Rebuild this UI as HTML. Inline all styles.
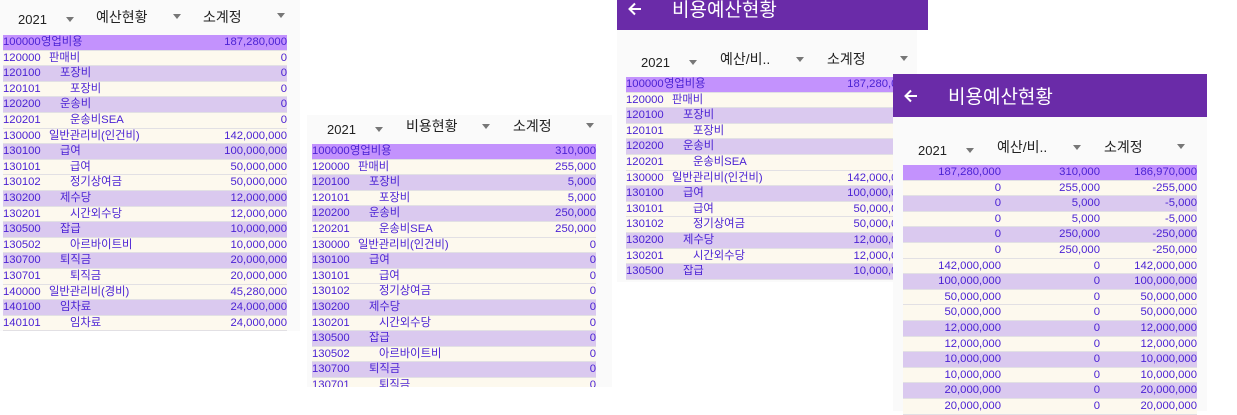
<!DOCTYPE html>
<html><head><meta charset="utf-8"><style>
*{margin:0;padding:0;box-sizing:border-box}
body{width:1237px;height:411px;background:#fff;position:relative;overflow:hidden;font-family:"Liberation Sans","Noto Sans CJK KR",sans-serif}
.bg{position:absolute;background:#fafafa}
.hd{position:absolute;background:#6a2ba8;color:#fff;font-size:19px}
.hd svg{position:absolute;left:11px;top:50%;margin-top:-7px}
.hd .t{position:absolute;left:55px;top:50%;transform:translateY(-52%);white-space:nowrap}
.p{position:absolute}
.sp{position:absolute;font-size:13px;color:#222;white-space:nowrap}
.sp.k{font-size:14px;top:7px!important}
.tri{position:absolute;width:0;height:0;border-left:4px solid transparent;border-right:4px solid transparent;border-top:5px solid #777}
.tb{position:absolute;left:3px;top:35px;width:284px}
.r{height:15.6px;line-height:15.6px;font-size:11.3px;color:#4b22d4;position:relative;border-bottom:1px solid #e2e0e4;white-space:nowrap}
.r.a{background:#c392fd}.r.l{background:#dac9ef}.r.c{background:#fdf9ee}
.r span{position:absolute;top:0}
.r .v{right:0}
.n1{left:46px}.n2{left:57px}.n3{left:67px}.n0{left:38px}
</style></head><body>

<!-- panel 1 -->
<div class="bg" style="left:0;top:0;width:300px;height:331px"></div>
<div class="p" style="left:0;top:0">
<div class="sp" style="left:18px;top:12px">2021</div><div class="tri" style="left:66px;top:17px"></div>
<div class="sp k" style="left:96px;top:8px">예산현황</div><div class="tri" style="left:173px;top:14px"></div>
<div class="sp k" style="left:203px;top:8px">소계정</div><div class="tri" style="left:277px;top:13px"></div>
<div class="tb">
<div class="r a"><span>100000</span><span class="n0">영업비용</span><span class="v">187,280,000</span></div>
<div class="r c"><span>120000</span><span class="n1">판매비</span><span class="v">0</span></div>
<div class="r l"><span>120100</span><span class="n2">포장비</span><span class="v">0</span></div>
<div class="r c"><span>120101</span><span class="n3">포장비</span><span class="v">0</span></div>
<div class="r l"><span>120200</span><span class="n2">운송비</span><span class="v">0</span></div>
<div class="r c"><span>120201</span><span class="n3">운송비SEA</span><span class="v">0</span></div>
<div class="r c"><span>130000</span><span class="n1">일반관리비(인건비)</span><span class="v">142,000,000</span></div>
<div class="r l"><span>130100</span><span class="n2">급여</span><span class="v">100,000,000</span></div>
<div class="r c"><span>130101</span><span class="n3">급여</span><span class="v">50,000,000</span></div>
<div class="r c"><span>130102</span><span class="n3">정기상여금</span><span class="v">50,000,000</span></div>
<div class="r l"><span>130200</span><span class="n2">제수당</span><span class="v">12,000,000</span></div>
<div class="r c"><span>130201</span><span class="n3">시간외수당</span><span class="v">12,000,000</span></div>
<div class="r l"><span>130500</span><span class="n2">잡급</span><span class="v">10,000,000</span></div>
<div class="r c"><span>130502</span><span class="n3">아르바이트비</span><span class="v">10,000,000</span></div>
<div class="r l"><span>130700</span><span class="n2">퇴직금</span><span class="v">20,000,000</span></div>
<div class="r c"><span>130701</span><span class="n3">퇴직금</span><span class="v">20,000,000</span></div>
<div class="r c"><span>140000</span><span class="n1">일반관리비(경비)</span><span class="v">45,280,000</span></div>
<div class="r l"><span>140100</span><span class="n2">임차료</span><span class="v">24,000,000</span></div>
<div class="r c"><span>140101</span><span class="n3">임차료</span><span class="v">24,000,000</span></div>
</div></div>

<!-- panel 2 -->
<div class="bg" style="left:307px;top:115px;width:305px;height:272px"></div>
<div class="p" style="left:309px;top:109px">
<div class="sp" style="left:18px;top:13px">2021</div><div class="tri" style="left:66px;top:18px"></div>
<div class="sp k" style="left:97px;top:9px">비용현황</div><div class="tri" style="left:173px;top:15px"></div>
<div class="sp k" style="left:204px;top:8px">소계정</div><div class="tri" style="left:277px;top:14px"></div>
<div class="tb" style="height:243px;overflow:hidden">
<div class="r a"><span>100000</span><span class="n0">영업비용</span><span class="v">310,000</span></div>
<div class="r c"><span>120000</span><span class="n1">판매비</span><span class="v">255,000</span></div>
<div class="r l"><span>120100</span><span class="n2">포장비</span><span class="v">5,000</span></div>
<div class="r c"><span>120101</span><span class="n3">포장비</span><span class="v">5,000</span></div>
<div class="r l"><span>120200</span><span class="n2">운송비</span><span class="v">250,000</span></div>
<div class="r c"><span>120201</span><span class="n3">운송비SEA</span><span class="v">250,000</span></div>
<div class="r c"><span>130000</span><span class="n1">일반관리비(인건비)</span><span class="v">0</span></div>
<div class="r l"><span>130100</span><span class="n2">급여</span><span class="v">0</span></div>
<div class="r c"><span>130101</span><span class="n3">급여</span><span class="v">0</span></div>
<div class="r c"><span>130102</span><span class="n3">정기상여금</span><span class="v">0</span></div>
<div class="r l"><span>130200</span><span class="n2">제수당</span><span class="v">0</span></div>
<div class="r c"><span>130201</span><span class="n3">시간외수당</span><span class="v">0</span></div>
<div class="r l"><span>130500</span><span class="n2">잡급</span><span class="v">0</span></div>
<div class="r c"><span>130502</span><span class="n3">아르바이트비</span><span class="v">0</span></div>
<div class="r l"><span>130700</span><span class="n2">퇴직금</span><span class="v">0</span></div>
<div class="r c"><span>130701</span><span class="n3">퇴직금</span><span class="v">0</span></div>
</div></div>

<!-- panel 3 -->
<div class="bg" style="left:617px;top:30px;width:300px;height:252px"></div>
<div class="hd" style="left:617px;top:-13px;width:311px;height:43px"><svg width="14" height="14" viewBox="0 0 14 14"><path d="M13 7H2M7 1.5L1.5 7 7 12.5" fill="none" stroke="#fff" stroke-width="2"/></svg><span class="t">비용예산현황</span></div>
<div class="p" style="left:623px;top:42px">
<div class="sp" style="left:18px;top:13px">2021</div><div class="tri" style="left:66px;top:18px"></div>
<div class="sp k" style="left:97px;top:8px">예산/비..</div><div class="tri" style="left:173px;top:15px"></div>
<div class="sp k" style="left:204px;top:8px">소계정</div><div class="tri" style="left:277px;top:14px"></div>
<div class="tb">
<div class="r a"><span>100000</span><span class="n0">영업비용</span><span class="v">187,280,000</span></div>
<div class="r c"><span>120000</span><span class="n1">판매비</span><span class="v">0</span></div>
<div class="r l"><span>120100</span><span class="n2">포장비</span><span class="v">0</span></div>
<div class="r c"><span>120101</span><span class="n3">포장비</span><span class="v">0</span></div>
<div class="r l"><span>120200</span><span class="n2">운송비</span><span class="v">0</span></div>
<div class="r c"><span>120201</span><span class="n3">운송비SEA</span><span class="v">0</span></div>
<div class="r c"><span>130000</span><span class="n1">일반관리비(인건비)</span><span class="v">142,000,000</span></div>
<div class="r l"><span>130100</span><span class="n2">급여</span><span class="v">100,000,000</span></div>
<div class="r c"><span>130101</span><span class="n3">급여</span><span class="v">50,000,000</span></div>
<div class="r c"><span>130102</span><span class="n3">정기상여금</span><span class="v">50,000,000</span></div>
<div class="r l"><span>130200</span><span class="n2">제수당</span><span class="v">12,000,000</span></div>
<div class="r c"><span>130201</span><span class="n3">시간외수당</span><span class="v">12,000,000</span></div>
<div class="r l"><span>130500</span><span class="n2">잡급</span><span class="v">10,000,000</span></div>
</div></div>

<!-- panel 4 -->
<div class="bg" style="left:893px;top:117px;width:314px;height:294px"></div>
<div class="hd" style="left:893px;top:74px;width:314px;height:43px"><svg width="14" height="14" viewBox="0 0 14 14"><path d="M13 7H2M7 1.5L1.5 7 7 12.5" fill="none" stroke="#fff" stroke-width="2"/></svg><span class="t">비용예산현황</span></div>
<div class="p" style="left:900px;top:130px">
<div class="sp" style="left:18px;top:13px">2021</div><div class="tri" style="left:66px;top:18px"></div>
<div class="sp k" style="left:97px;top:8px">예산/비..</div><div class="tri" style="left:173px;top:15px"></div>
<div class="sp k" style="left:204px;top:8px">소계정</div><div class="tri" style="left:277px;top:14px"></div>
<div class="tb" style="width:294px">
<div class="r a"><span style="right:196px">187,280,000</span><span style="right:97px">310,000</span><span class="v">186,970,000</span></div>
<div class="r c"><span style="right:196px">0</span><span style="right:97px">255,000</span><span class="v">-255,000</span></div>
<div class="r l"><span style="right:196px">0</span><span style="right:97px">5,000</span><span class="v">-5,000</span></div>
<div class="r c"><span style="right:196px">0</span><span style="right:97px">5,000</span><span class="v">-5,000</span></div>
<div class="r l"><span style="right:196px">0</span><span style="right:97px">250,000</span><span class="v">-250,000</span></div>
<div class="r c"><span style="right:196px">0</span><span style="right:97px">250,000</span><span class="v">-250,000</span></div>
<div class="r c"><span style="right:196px">142,000,000</span><span style="right:97px">0</span><span class="v">142,000,000</span></div>
<div class="r l"><span style="right:196px">100,000,000</span><span style="right:97px">0</span><span class="v">100,000,000</span></div>
<div class="r c"><span style="right:196px">50,000,000</span><span style="right:97px">0</span><span class="v">50,000,000</span></div>
<div class="r c"><span style="right:196px">50,000,000</span><span style="right:97px">0</span><span class="v">50,000,000</span></div>
<div class="r l"><span style="right:196px">12,000,000</span><span style="right:97px">0</span><span class="v">12,000,000</span></div>
<div class="r c"><span style="right:196px">12,000,000</span><span style="right:97px">0</span><span class="v">12,000,000</span></div>
<div class="r l"><span style="right:196px">10,000,000</span><span style="right:97px">0</span><span class="v">10,000,000</span></div>
<div class="r c"><span style="right:196px">10,000,000</span><span style="right:97px">0</span><span class="v">10,000,000</span></div>
<div class="r l"><span style="right:196px">20,000,000</span><span style="right:97px">0</span><span class="v">20,000,000</span></div>
<div class="r c"><span style="right:196px">20,000,000</span><span style="right:97px">0</span><span class="v">20,000,000</span></div>
</div></div>
</body></html>
